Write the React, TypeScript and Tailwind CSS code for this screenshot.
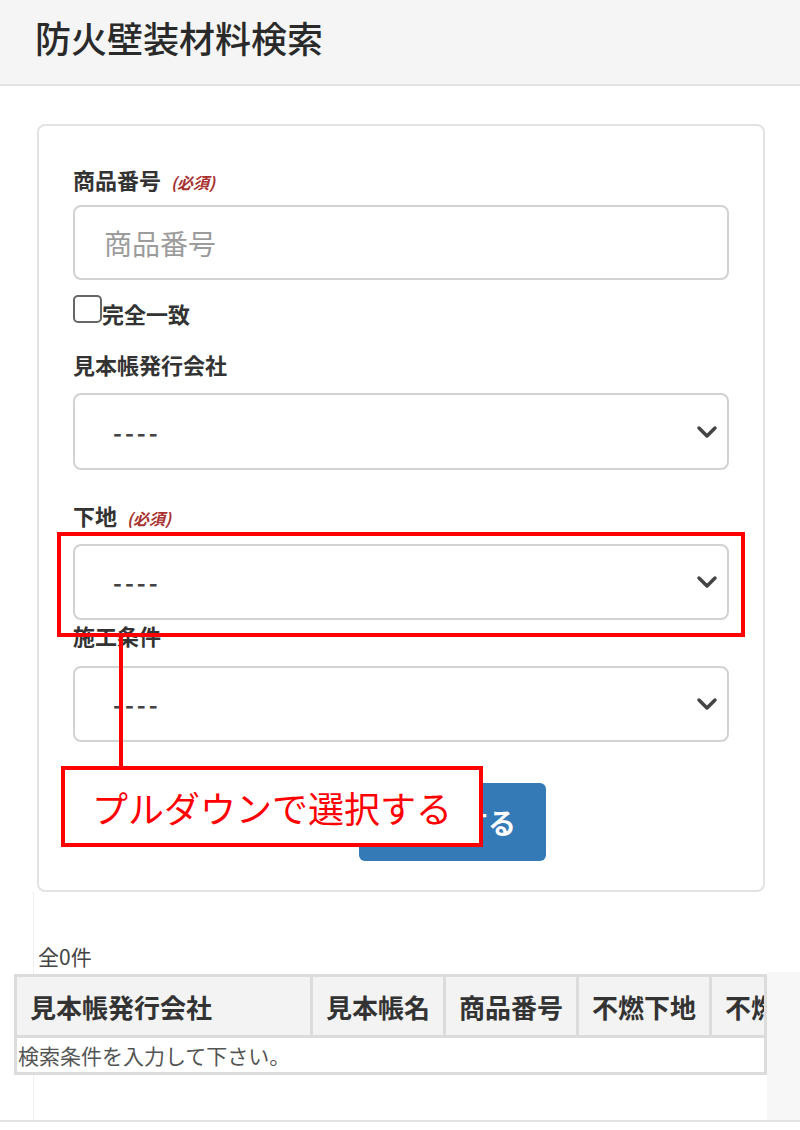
import React from "react";

const FONT = { fontFamily: '"Noto Sans CJK JP", "Noto Sans", sans-serif' };

function Chevron() {
  return (
    <svg width="22" height="14" viewBox="0 0 22 14" className="shrink-0">
      <polyline points="3,3 11,11 19,3" fill="none" stroke="#444" strokeWidth="3.5" strokeLinecap="round" strokeLinejoin="round" />
    </svg>
  );
}

function SelectBox({ h, mt }: { h: string; mt: string }) {
  return (
    <div className={`${h} ${mt} w-full rounded-[8px] border-2 border-[#d2d2d2] bg-white flex items-center pl-[38px] pr-[9px] justify-between`}>
      <span className="text-[24px] font-bold leading-none tracking-[3px] text-[#444]">----</span>
      <Chevron />
    </div>
  );
}

function Required() {
  return <span className="ml-[10px] text-[16px] font-bold italic text-[#a83232] leading-none translate-y-[3px]">(必須)</span>;
}

export default function App() {
  return (
    <div className="relative w-[800px] h-[1130px] bg-white overflow-hidden text-[#333]" style={FONT}>
      {/* header */}
      <div className="h-[86px] bg-[#f5f5f5] border-b-2 border-[#e3e3e3] flex items-center pl-[35px] pb-[10px]">
        <h1 className="text-[36px] font-medium leading-none text-[#2a2a2a]">防火壁装材料検索</h1>
      </div>

      {/* search card */}
      <div className="mt-[38px] ml-[37px] w-[728px] rounded-[8px] border-2 border-[#e3e3e3] bg-white pt-[40px] px-[34px] pb-[29px]">
        <div className="h-[26px] flex items-center">
          <span className="text-[22px] font-bold leading-none">商品番号</span>
          <Required />
        </div>
        <input
          readOnly
          placeholder="商品番号"
          className="mt-[13px] h-[75px] w-full rounded-[8px] border-2 border-[#d2d2d2] bg-white pl-[29px] text-[28px] outline-none placeholder:text-[#9c9c9c]"
        />
        <div className="mt-[15px] h-[28px] flex items-center">
          <div className="w-[29px] h-[28px] rounded-[5px] border-2 border-[#666] bg-white shrink-0" />
          <span className="text-[22px] font-bold leading-none mt-[8px]">完全一致</span>
        </div>

        <div className="mt-[28px] h-[26px] flex items-center">
          <span className="text-[22px] font-bold leading-none">見本帳発行会社</span>
        </div>
        <SelectBox h="h-[77px]" mt="mt-[16px]" />

        <div className="mt-[32px] h-[26px] flex items-center">
          <span className="text-[22px] font-bold leading-none">下地</span>
          <Required />
        </div>
        <SelectBox h="h-[76px]" mt="mt-[16px]" />

        <div className="mt-[2px] h-[26px] flex items-center">
          <span className="text-[22px] font-bold leading-none">施工条件</span>
        </div>
        <SelectBox h="h-[76px]" mt="mt-[18px]" />

        <button className="mt-[41px] ml-[286px] h-[78px] w-[187px] rounded-[6px] bg-[#337ab7] text-white text-[28px] font-bold flex items-center justify-end pr-[30px]">
          検索する
        </button>
      </div>

      {/* results section */}
      <div className="flex h-[228px]">
        <div className="w-[33px] shrink-0" />
        <div className="w-[734px] shrink-0 border-l border-[#f0f0f0]">
          <div className="mt-[52px] pl-[4px] h-[24px] flex items-center text-[21px] leading-none text-[#444]">全0件</div>
          <div className="mt-[6px] -ml-[20px] w-[753px] border-[3px] border-[#dcdcdc] overflow-hidden bg-white">
            <div className="flex h-[58px] bg-[#f3f3f3] whitespace-nowrap">
              <div className="w-[296px] shrink-0 border-r-[3px] border-[#dcdcdc] flex items-center px-[13px] text-[26px] font-bold">見本帳発行会社</div>
              <div className="w-[133px] shrink-0 border-r-[3px] border-[#dcdcdc] flex items-center px-[13px] text-[26px] font-bold">見本帳名</div>
              <div className="w-[133px] shrink-0 border-r-[3px] border-[#dcdcdc] flex items-center px-[13px] text-[26px] font-bold">商品番号</div>
              <div className="w-[133px] shrink-0 border-r-[3px] border-[#dcdcdc] flex items-center px-[13px] text-[26px] font-bold">不燃下地</div>
              <div className="w-[133px] shrink-0 flex items-center px-[13px] text-[26px] font-bold">不燃材料</div>
            </div>
            <div className="h-[37px] border-t-[3px] border-[#dcdcdc] flex items-center pl-[1px] text-[21px] leading-none text-[#555] whitespace-nowrap">
              検索条件を入力して下さい。
            </div>
          </div>
        </div>
        <div className="flex-1 flex flex-col">
          <div className="h-[80px]" />
          <div className="flex-1 bg-[#f7f7f7]" />
        </div>
      </div>
      <div className="h-[2px] bg-[#e2e2e2]" />

      {/* annotation overlay */}
      <div className="absolute left-[57px] top-[532px] w-[688px] h-[105px] border-4 border-[#ff0000]" />
      <div className="absolute left-[119px] top-[636px] w-[4px] h-[132px] bg-[#ff0000]" />
      <div className="absolute left-[61px] top-[766px] w-[422px] h-[81px] border-4 border-[#ff0000] bg-white flex items-center pl-[27px]">
        <span className="text-[36px] leading-none text-[#ff0000] whitespace-nowrap">プルダウンで選択する</span>
      </div>
    </div>
  );
}
